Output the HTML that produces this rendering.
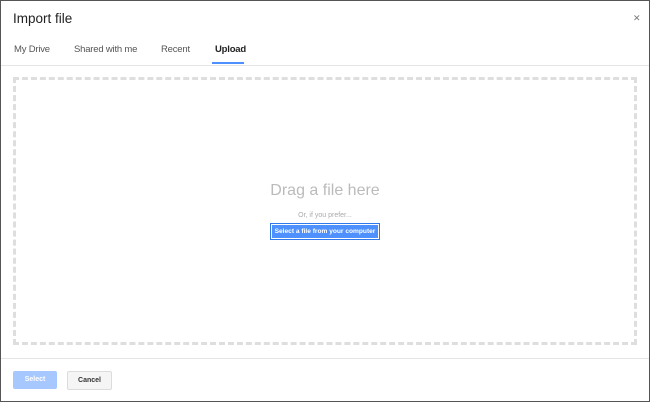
<!DOCTYPE html>
<html><head><style>
html,body{margin:0;padding:0;}
body{width:650px;height:402px;position:relative;overflow:hidden;background:#fff;font-family:"Liberation Sans",Arial,sans-serif;}
.frame{position:absolute;left:0;top:0;width:648px;height:400px;border:1px solid #555;}
.title{position:absolute;left:13px;top:11px;font-size:13.5px;color:#222;}
.close{position:absolute;left:633px;top:13px;font-size:9px;color:#777;}
.tab{position:absolute;top:44px;font-size:9.5px;color:#555;letter-spacing:-0.2px;}
.ul{position:absolute;left:212px;top:62px;width:32px;height:2px;background:#4d90fe;}
.div1{position:absolute;left:1px;top:65px;width:648px;height:1px;background:#e5e5e5;}
.drop{position:absolute;left:13px;top:77px;width:618px;height:262px;border:3px dashed #dedede;}
.drag{position:absolute;left:0;width:650px;text-align:center;top:182px;font-size:16px;color:#bbb;}
.or{position:absolute;left:0;width:650px;text-align:center;top:212px;font-size:7px;color:#aaa;}
.sel{position:absolute;left:270px;top:223px;width:110px;height:17px;background:#4d90fe;border:1px solid #3079ed;box-shadow:inset 0 0 0 1px #fff;color:#fff;font-size:6.6px;font-weight:bold;text-align:center;line-height:15px;box-sizing:border-box;}
.div2{position:absolute;left:1px;top:358px;width:648px;height:1px;background:#e5e5e5;}
.b1{position:absolute;left:13px;top:371px;width:44px;height:18px;background:#a6c8ff;border-radius:2px;color:#fff;font-size:7px;font-weight:bold;text-align:center;line-height:18px;}
.b2{position:absolute;left:67px;top:371px;width:43px;height:17px;background:#f5f5f5;border:1px solid #dcdcdc;border-radius:2px;color:#333;font-size:7px;font-weight:bold;text-align:center;line-height:17px;}
</style></head><body>
<div class="frame"></div>
<div class="title">Import file</div>
<div class="close">✕</div>
<div class="tab" style="left:14px">My Drive</div>
<div class="tab" style="left:74px">Shared with me</div>
<div class="tab" style="left:161px">Recent</div>
<div class="tab" style="left:215px;font-weight:bold;color:#222">Upload</div>
<div class="ul"></div>
<div class="div1"></div>
<div class="drop"></div>
<div class="drag">Drag a file here</div>
<div class="or">Or, if you prefer...</div>
<div class="sel">Select a file from your computer</div>
<div class="div2"></div>
<div class="b1">Select</div>
<div class="b2">Cancel</div>
</body></html>
